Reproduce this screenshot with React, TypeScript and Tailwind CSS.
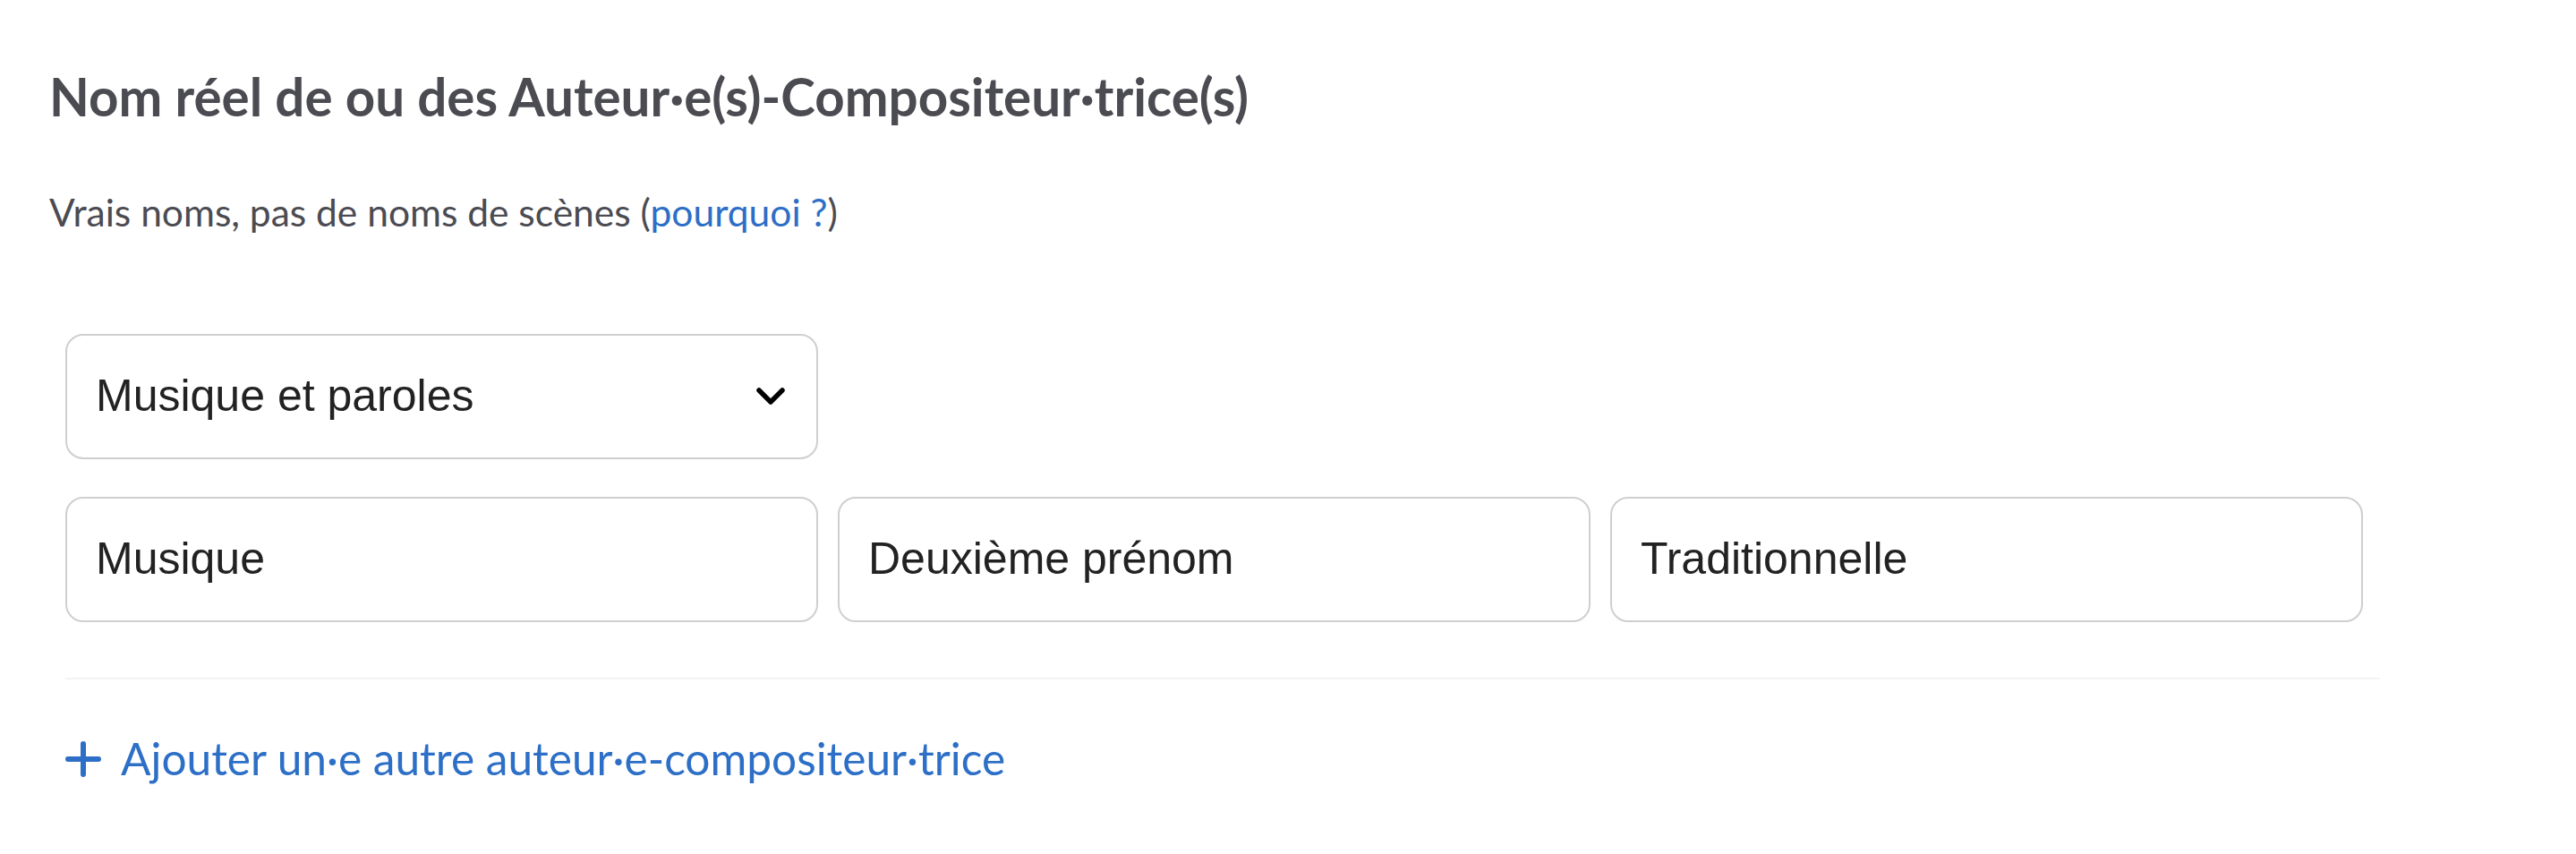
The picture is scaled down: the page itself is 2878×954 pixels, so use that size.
const fields = ["Musique", "Deuxième prénom", "Traditionnelle"];

export default function App() {
    return (
        <div className="min-h-screen bg-white pl-[55px] pt-[73px]" style={{ fontFamily: "Lato, sans-serif" }}>
            <h2 className="text-[58.3px] leading-[1.2] font-bold text-[#4b4b52]">
                Nom réel de ou des Auteur·e(s)-Compositeur·trice(s)
            </h2>
            <p className="mt-[68px] text-[42.5px] leading-[1.2] text-[#4b4b52]">
                Vrais noms, pas de noms de scènes (<a className="text-[#2d6fc6]" href="#">pourquoi ?</a>)
            </p>

            <div className="ml-[18px] mt-[111px] w-[2586px] flex flex-col">
                <div className="w-[841px] h-[140px] pl-[32px] pr-[34px] flex items-center justify-between rounded-[20px] border-2 border-[#cfcfcf] bg-white">
                    <span className="text-[50px] text-[#222]" style={{ fontFamily: "'Liberation Sans', Arial, sans-serif" }}>
                        Musique et paroles
                    </span>
                    <svg width="34" height="22" viewBox="0 0 34 22" fill="none">
                        <polyline points="4,4 17,17 30,4" stroke="#000" strokeWidth="5.5" strokeLinecap="round" strokeLinejoin="round" />
                    </svg>
                </div>

                <div className="mt-[42px] flex gap-[22px]">
                    {fields.map((f) => (
                        <div
                            key={f}
                            className="w-[841px] h-[140px] pl-[32px] flex items-center rounded-[20px] border-2 border-[#cfcfcf] bg-white"
                        >
                            <span className="text-[50px] text-[#222]" style={{ fontFamily: "'Liberation Sans', Arial, sans-serif" }}>
                                {f}
                            </span>
                        </div>
                    ))}
                </div>

                <div className="mt-[62px] h-[2px] bg-[#f3f3f3]" />

                <button className="mt-[59px] flex items-center gap-[22px] text-[#2d6fc6] text-[49.6px] leading-[1.2]">
                    <svg width="40" height="40" viewBox="0 0 40 40" fill="none">
                        <path d="M20 3v34M3 20h34" stroke="#2d6fc6" strokeWidth="6" strokeLinecap="round" />
                    </svg>
                    <span>Ajouter un·e autre auteur·e-compositeur·trice</span>
                </button>
            </div>
        </div>
    );
}
